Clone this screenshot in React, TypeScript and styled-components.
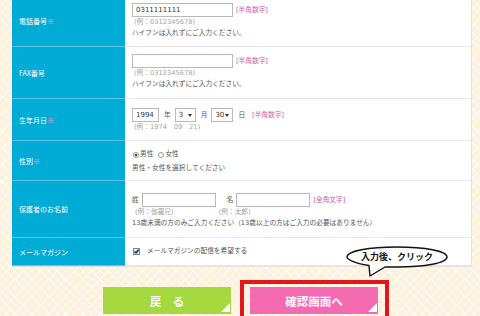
import styled, { createGlobalStyle } from 'styled-components';

// 会員登録フォームの一部 + 確認ボタン
const GlobalStyle = createGlobalStyle`
  body {
    margin: 0;
    font-family: "Noto Sans CJK JP", "Noto Sans", sans-serif;
    background-color: #fdf1dc;
    background-image:
      repeating-linear-gradient(45deg, rgba(255, 255, 255, 0.7) 0 1px, transparent 1px 6px),
      repeating-linear-gradient(-45deg, rgba(255, 255, 255, 0.7) 0 1px, transparent 1px 6px);
  }
`;

const Page = styled.div`
  position: relative;
  width: 480px;
  height: 316px;
  overflow: hidden;
`;

const FormTable = styled.div`
  margin: -5px 0 0 12px;
  width: 459px;
  border-right: 1px solid #e6dfe0;
  border-bottom: 1px solid #e6dfe0;
`;

const Row = styled.div<{ $h: number }>`
  display: grid;
  grid-template-columns: 113px 1fr;
  height: ${(p) => p.$h}px;
`;

const Label = styled.div`
  display: flex;
  align-items: center;
  padding-left: 7px;
  background: #00abd5;
  color: #fff;
  font-size: 7px;
  border-bottom: 1px solid #5ec6e3;
`;

const Req = styled.span`
  color: #e7a3d2;
`;

const Value = styled.div<{ $pt: number }>`
  background: #fff;
  padding: ${(p) => p.$pt}px 0 0 7px;
  border-bottom: 1px solid #ece6e8;
  font-family: "DejaVu Sans", "Noto Sans CJK JP", sans-serif;
  font-size: 6.7px;
  color: #555;
  line-height: 11px;
`;

const Line = styled.div<{ $mt?: number }>`
  display: flex;
  align-items: center;
  margin-top: ${(p) => p.$mt ?? 0}px;
  white-space: nowrap;
`;

const TextInput = styled.input<{ $w: number }>`
  box-sizing: border-box;
  width: ${(p) => p.$w}px;
  height: 14px;
  margin: 0;
  padding: 0 3px;
  border: 1px solid #b9b9b9;
  background: #fff;
  font-family: "DejaVu Sans", sans-serif;
  font-size: 7px;
  color: #333;
  outline: none;
`;

const Tag = styled.span`
  margin-left: 3px;
  color: #cf5ea6;
`;

const Example = styled.div<{ $ml?: number }>`
  padding-left: ${(p) => p.$ml ?? 2}px;
  color: #a3a3a3;
`;

const Unit = styled.span`
  margin: 0 4px 0 5px;
  color: #555;
`;

const SelectBox = styled.span<{ $w: number }>`
  position: relative;
  box-sizing: border-box;
  display: inline-flex;
  align-items: center;
  width: ${(p) => p.$w}px;
  height: 14px;
  padding-left: 3px;
  border: 1px solid #b9b9b9;
  font-size: 7px;
  color: #333;
  &::after {
    content: '';
    position: absolute;
    right: 3px;
    top: 5px;
    border-left: 2px solid transparent;
    border-right: 2px solid transparent;
    border-top: 3px solid #333;
  }
`;

const Radio = styled.span<{ $on?: boolean }>`
  box-sizing: border-box;
  display: inline-block;
  width: 6px;
  height: 6px;
  margin: 0 1px;
  border-radius: 50%;
  border: 1px solid #999;
  background: ${(p) => (p.$on ? 'radial-gradient(circle, #444 0 1.4px, #fff 1.6px)' : '#fff')};
`;

const Choice = styled.span`
  display: inline-flex;
  align-items: center;
  margin-right: 4px;
`;

const Check = styled.span`
  display: inline-flex;
  width: 7px;
  height: 7px;
  margin: 0 7px 0 1px;
`;

const NameLabel = styled.span<{ $ml?: number }>`
  margin: 0 3px 0 ${(p) => p.$ml ?? 0}px;
`;

const ButtonRow = styled.div`
  display: flex;
  align-items: flex-start;
  gap: 9px;
  padding: 13px 0 0 103px;
`;

const Button = styled.div<{ $bg: string }>`
  position: relative;
  display: flex;
  align-items: center;
  justify-content: center;
  width: 128px;
  height: 27px;
  background: ${(p) => p.$bg};
  color: #fff;
  font-size: 11.5px;
  font-weight: bold;
  &::after {
    content: '';
    position: absolute;
    right: 1px;
    bottom: 2px;
    border-left: 9px solid transparent;
    border-bottom: 9px solid #fff;
  }
`;

const BackButton = styled(Button)`
  margin-top: 7px;
`;

const Highlight = styled.div`
  padding: 3px 7px 4px 6px;
  border: 4px solid #e2161d;
`;

const Bubble = styled.div`
  position: absolute;
  left: 345px;
  top: 245px;
  width: 104px;
  height: 34px;
`;

const BubbleText = styled.span`
  position: absolute;
  left: 0;
  top: 4px;
  width: 104px;
  text-align: center;
  font-size: 9px;
  font-weight: bold;
  color: #111;
  line-height: 15px;
`;

export default function App() {
  return (
    <Page>
      <GlobalStyle />
      <FormTable>
        <Row $h={52}>
          <Label>
            電話番号<Req>※</Req>
          </Label>
          <Value $pt={8}>
            <Line>
              <TextInput $w={101} defaultValue="0311111111" />
              <Tag>[半角数字]</Tag>
            </Line>
            <Example>(例：0312345678)</Example>
            <div>ハイフンは入れずにご入力ください。</div>
          </Value>
        </Row>
        <Row $h={52}>
          <Label>FAX番号</Label>
          <Value $pt={7}>
            <Line>
              <TextInput $w={101} />
              <Tag>[半角数字]</Tag>
            </Line>
            <Example>(例：0312345678)</Example>
            <div>ハイフンは入れずにご入力ください。</div>
          </Value>
        </Row>
        <Row $h={42}>
          <Label>
            生年月日<Req>※</Req>
          </Label>
          <Value $pt={9}>
            <Line>
              <TextInput $w={27} defaultValue="1994" />
              <Unit>年</Unit>
              <SelectBox $w={21}>3</SelectBox>
              <Unit>月</Unit>
              <SelectBox $w={22}>30</SelectBox>
              <Unit>日</Unit>
              <Tag>[半角数字]</Tag>
            </Line>
            <Example>(例：1974　09　21)</Example>
          </Value>
        </Row>
        <Row $h={40}>
          <Label>
            性別<Req>※</Req>
          </Label>
          <Value $pt={7}>
            <Line $mt={1}>
              <Choice>
                <Radio $on />
                男性
              </Choice>
              <Choice>
                <Radio />
                女性
              </Choice>
            </Line>
            <Line $mt={3}>男性・女性を選択してください</Line>
          </Value>
        </Row>
        <Row $h={57}>
          <Label>保護者のお名前</Label>
          <Value $pt={12}>
            <Line>
              <NameLabel>姓</NameLabel>
              <TextInput $w={74} />
              <NameLabel $ml={11}>名</NameLabel>
              <TextInput $w={74} />
              <Tag>[全角文字]</Tag>
            </Line>
            <Line>
              <Example $ml={3}>(例：伽羅兄)</Example>
              <Example $ml={45}>(例：太郎)</Example>
            </Line>
            <div>13歳未満の方のみご入力ください（13歳以上の方はご入力の必要はありません）</div>
          </Value>
        </Row>
        <Row $h={28}>
          <Label>メールマガジン</Label>
          <Value $pt={8}>
            <Line>
              <Check>
                <svg width="7" height="7" viewBox="0 0 7 7">
                  <rect x="0.5" y="0.5" width="6" height="6" fill="#dfe6f2" stroke="#7d8590" />
                  <path d="M1.6 3.6 L3 5 L5.6 1.8" fill="none" stroke="#1f2a44" strokeWidth="1.4" />
                </svg>
              </Check>
              メールマガジンの配信を希望する
            </Line>
          </Value>
        </Row>
      </FormTable>
      <ButtonRow>
        <BackButton $bg="#a6d83f">戻　る</BackButton>
        <Highlight>
          <Button $bg="#f56bb1">確認画面へ</Button>
        </Highlight>
      </ButtonRow>
      <Bubble>
        <svg width="104" height="34" viewBox="0 0 104 34">
          <path
            d="M24 20.5 C8 18 2 14 2 12 C2 6 24 2 52 2 C80 2 102 6 102 12 C102 18 80 22 52 22 C46 22 42 22 40 22 L25 31 Z"
            fill="#fff"
            stroke="#111"
            strokeWidth="1.4"
            strokeLinejoin="round"
          />
        </svg>
        <BubbleText>入力後、クリック</BubbleText>
      </Bubble>
    </Page>
  );
}
